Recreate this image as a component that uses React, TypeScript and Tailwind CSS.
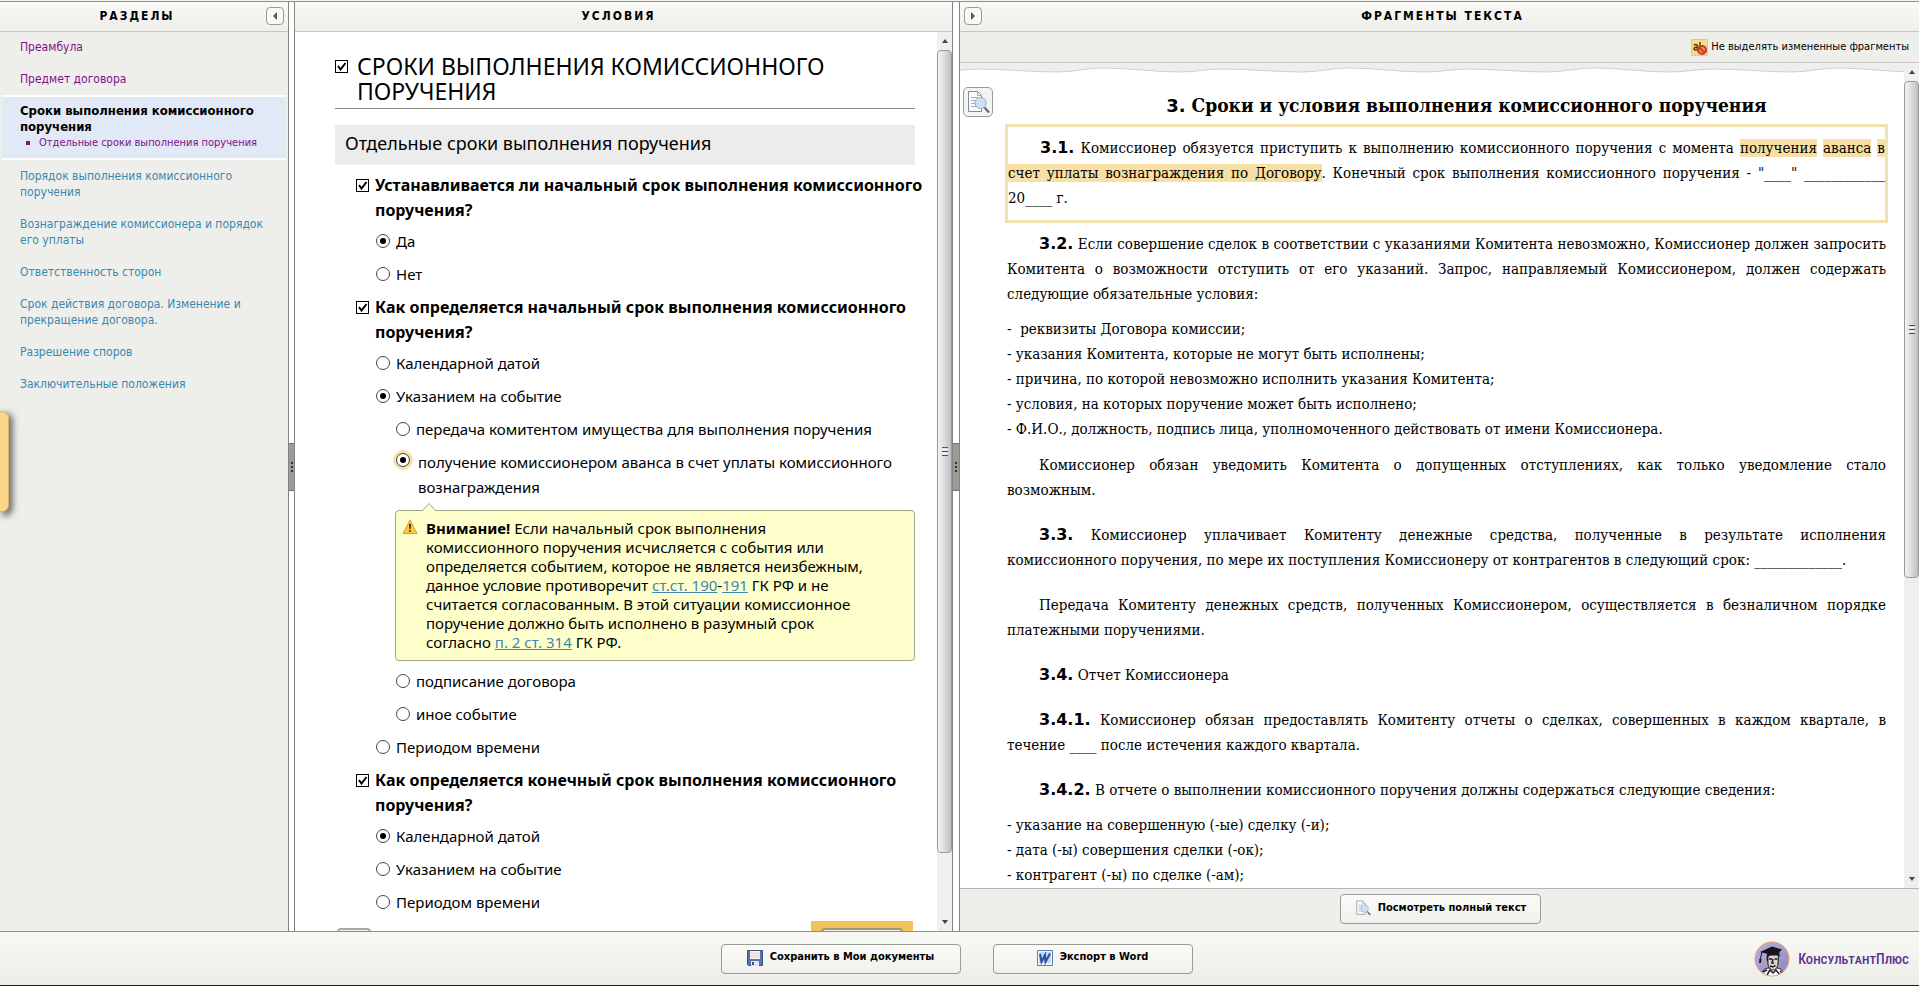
import React, { useState } from "react";

const App = () => {
  return (
    <div className="relative flex h-screen flex-col overflow-hidden border-t border-[#f4f4f1] bg-white font-['DejaVu_Sans_Condensed','DejaVu_Sans',sans-serif] text-[15px] text-black">
      <main className="grid min-h-0 flex-1 grid-cols-[minmax(0,288fr)_7px_minmax(0,657fr)_8px_minmax(0,959fr)] border-t border-[#8f908c]">
        <Sections />
        <Splitter />
        <Conditions />
        <Splitter />
        <Fragments />
      </main>
      <Footer />

      {/* Pull-out tab */}
      <button
        aria-label="Открыть панель"
        className="absolute left-0 top-[410px] h-[101px] w-[9px] rounded-r-[7px] border border-l-0 border-[#d9b36c] bg-[#fdd58a] shadow-[3px_3px_6px_1px_rgba(60,60,50,0.7)]"
      />
    </div>
  );
};

const Splitter = () => (
  <div className="flex items-center border-x border-[#848583] bg-white">
    <div className="flex h-12 w-full flex-col items-center justify-center gap-0.5 border-y border-[#70716d] bg-[#9b9c98]">
      <span className="h-0.5 w-0.5 bg-[#333]" />
      <span className="h-0.5 w-0.5 bg-[#333]" />
      <span className="h-0.5 w-0.5 bg-[#333]" />
    </div>
  </div>
);

type PanelHeaderProps = {
  title: string;
  className?: string;
  before?: React.ReactNode;
  after?: React.ReactNode;
};

const PanelHeader = ({ title, className = "", before, after }: PanelHeaderProps) => (
  <header className={`flex h-[30px] shrink-0 items-center border-b border-[#c6c7c3] bg-linear-to-b from-[#f8f9f5] to-[#eeefeb] pb-0.5 ${className}`}>
    {before}
    <h2 className="flex-1 text-center font-['DejaVu_Sans_Condensed','DejaVu_Sans',sans-serif] text-xs font-bold tracking-[2px]">
      {title}
    </h2>
    {after}
  </header>
);

const ArrowButton = ({ dir }: { dir: "left" | "right" }) => (
  <button
    aria-label={dir === "left" ? "Свернуть" : "Развернуть"}
    className="flex h-[18px] w-[18px] items-center justify-center rounded border border-[#9a9b98] bg-[#f8f9f6]"
  >
    <svg viewBox="0 0 6 8" className="h-2 w-1.5" fill="#555">
      <path d={dir === "left" ? "M5 0v8L1 4z" : "M1 0v8l4-4z"} />
    </svg>
  </button>
);

/* Sections */

const sections = [
  { name: "Порядок выполнения комиссионного поручения" },
  { name: "Вознаграждение комиссионера и порядок его уплаты" },
  { name: "Ответственность сторон" },
  { name: "Срок действия договора. Изменение и прекращение договора." },
  { name: "Разрешение споров" },
  { name: "Заключительные положения" },
];

const SectionLink = ({ name, visited }: { name: string; visited?: boolean }) => (
  <a href="#" className={`block pl-5 pr-4 ${visited ? "text-[#7d1186]" : "text-[#3a87b2]"}`}>
    {name}
  </a>
);

const Sections = () => (
  <aside className="flex flex-col bg-[#eeefeb]">
    <PanelHeader title="РАЗДЕЛЫ" className="pl-2 pr-1" after={<ArrowButton dir="left" />} />
    <nav className="flex flex-col gap-4 pt-[7px] text-xs leading-4">
      <SectionLink name="Преамбула" visited />
      <SectionLink name="Предмет договора" visited />
      <div className="-my-2 mx-0.5 border-y-2 border-white bg-[#e1e8f6] pb-[7px] pl-[18px] pt-1.5">
        <p className="text-[13px] font-bold leading-4">Сроки выполнения комиссионного поручения</p>
        <a href="#" className="flex items-center gap-[9px] pl-1.5 text-[11px] leading-4 text-[#7d1186]">
          <span className="h-1 w-1 bg-[#7d1186]" />
          Отдельные сроки выполнения поручения
        </a>
      </div>
      {sections.map((s) => (
        <SectionLink key={s.name} name={s.name} />
      ))}
    </nav>
  </aside>
);

/* Scroll bar */

type ScrollBarProps = {
  thumb: string;
};

const ScrollBar = ({ thumb }: ScrollBarProps) => (
  <div className="flex w-[15px] shrink-0 flex-col items-center bg-[#efefef]">
    <svg viewBox="0 0 6 4" className="mb-[7px] mt-[7px] h-1 w-1.5 shrink-0" fill="#444">
      <path d="M0 4h6L3 0z" />
    </svg>
    <div className="flex min-h-0 w-full flex-1 flex-col">
      <div className={`flex w-full flex-col items-center justify-center gap-px rounded-sm border border-[#98999b] bg-linear-to-r from-[#f4f4f4] via-[#dcdcdf] to-[#bdbec1] ${thumb}`}>
        <span className="h-px w-1.5 bg-[#555]" />
        <span className="h-px w-1.5 bg-white" />
        <span className="h-px w-1.5 bg-[#555]" />
        <span className="h-px w-1.5 bg-white" />
        <span className="h-px w-1.5 bg-[#555]" />
      </div>
    </div>
    <svg viewBox="0 0 6 4" className="my-[7px] h-1 w-1.5 shrink-0" fill="#444">
      <path d="M0 0h6L3 4z" />
    </svg>
  </div>
);

/* Conditions */

type CheckProps = {
  id: string;
  className?: string;
};

const Check = ({ id, className = "" }: CheckProps) => (
  <span className={`grid h-[13px] w-[13px] shrink-0 ${className}`}>
    <input
      id={id}
      type="checkbox"
      defaultChecked
      className="peer col-start-1 row-start-1 h-[13px] w-[13px] appearance-none border border-black bg-white"
    />
    <svg
      viewBox="0 0 13 13"
      className="pointer-events-none invisible col-start-1 row-start-1 h-[13px] w-[13px] peer-checked:visible"
      fill="none"
      stroke="#000"
      strokeWidth="2"
    >
      <path d="M3 6l2.500 3.500L10.500 3" />
    </svg>
  </span>
);

const Question = ({ id, text }: { id: string; text: string }) => (
  <div className="mt-2 flex gap-1.5 pl-[21px]">
    <Check id={id} className="mt-1.5" />
    <label htmlFor={id} className="text-base font-bold leading-[25px]">
      {text}
    </label>
  </div>
);

type OptionProps = {
  name: string;
  value: string;
  label: string;
  current: string;
  onPick: (value: string) => void;
  glow?: boolean;
};

const Option = ({ name, value, label, current, onPick, glow }: OptionProps) => (
  <label className={`flex leading-[25px] ${glow ? "gap-2" : "gap-1.5"}`}>
    <input
      type="radio"
      name={name}
      value={value}
      checked={current === value}
      onChange={() => onPick(value)}
      className={`h-3.5 w-3.5 shrink-0 appearance-none rounded-full border border-[#444] bg-white bg-clip-content p-[3px] checked:bg-black ${glow ? "mt-[3px] ring-[3px] ring-[#f6e2ab]" : "mt-[5px]"}`}
    />
    <span>{label}</span>
  </label>
);

const Conditions = () => {
  const [hasStart, setHasStart] = useState("yes");
  const [start, setStart] = useState("event");
  const [event, setEvent] = useState("advance");
  const [end, setEnd] = useState("date");

  return (
    <section className="flex flex-col overflow-hidden font-['Noto_Sans','DejaVu_Sans',sans-serif]">
      <PanelHeader title="УСЛОВИЯ" className="pr-2.5" />
      <div className="flex min-h-0 flex-1">
        <div className="min-w-0 flex-1 overflow-hidden pl-10 pr-3 pt-[22px]">
          <div className="mr-2.5 flex gap-[9px] border-b border-[#8a8b86] pb-1">
            <Check id="main" className="mt-1.5" />
            <label htmlFor="main" className="text-[23px] leading-[25px]">
              СРОКИ ВЫПОЛНЕНИЯ КОМИССИОННОГО ПОРУЧЕНИЯ
            </label>
          </div>
          <h3 className="mb-[7px] mr-2.5 mt-4 bg-[#ececec] px-2.5 pb-1 text-lg leading-9">
            Отдельные сроки выполнения поручения
          </h3>

          <Question id="q1" text="Устанавливается ли начальный срок выполнения комиссионного поручения?" />
          <div className="mt-1.5 flex flex-col gap-2 pl-[41px]">
            <Option name="has-start" value="yes" label="Да" current={hasStart} onPick={setHasStart} />
            <Option name="has-start" value="no" label="Нет" current={hasStart} onPick={setHasStart} />
          </div>

          <Question id="q2" text="Как определяется начальный срок выполнения комиссионного поручения?" />
          <div className="mt-1.5 flex flex-col gap-2 pl-[41px]">
            <Option name="start" value="date" label="Календарной датой" current={start} onPick={setStart} />
            <Option name="start" value="event" label="Указанием на событие" current={start} onPick={setStart} />
            <div className="flex flex-col gap-2 pl-5">
              <Option
                name="event"
                value="transfer"
                label="передача комитентом имущества для выполнения поручения"
                current={event}
                onPick={setEvent}
              />
              <Option
                name="event"
                value="advance"
                label="получение комиссионером аванса в счет уплаты комиссионного вознаграждения"
                current={event}
                onPick={setEvent}
                glow
              />
              <Warning />
              <Option name="event" value="signing" label="подписание договора" current={event} onPick={setEvent} />
              <Option name="event" value="other" label="иное событие" current={event} onPick={setEvent} />
            </div>
            <Option name="start" value="period" label="Периодом времени" current={start} onPick={setStart} />
          </div>

          <Question id="q3" text="Как определяется конечный срок выполнения комиссионного поручения?" />
          <div className="mt-1.5 flex flex-col gap-2 pl-[41px]">
            <Option name="end" value="date" label="Календарной датой" current={end} onPick={setEnd} />
            <Option name="end" value="event" label="Указанием на событие" current={end} onPick={setEnd} />
            <Option name="end" value="period" label="Периодом времени" current={end} onPick={setEnd} />
          </div>

          <div className="mr-3 mt-1.5 flex items-start justify-between">
            <button aria-label="Назад" className="ml-0.5 mt-[7px] h-8 w-[34px] rounded border-2 border-[#a9aaa6] bg-[#f5f6f2]" />
            <span className="bg-[#f0c35c] px-2.5 py-[7px]">
              <button aria-label="Далее" className="block h-8 w-[82px] rounded border-2 border-[#a39678] bg-[#f5f6f2]" />
            </span>
          </div>
        </div>
        <ScrollBar thumb="h-[93%]" />
      </div>
    </section>
  );
};

const Warning = () => (
  <div className="relative -ml-px mr-2.5 mt-0.5 flex items-start gap-2 rounded-sm border border-[#a3a48c] bg-[#ffffcb] pb-2 pl-1.5 pr-12 pt-2 leading-[19px]">
    <svg viewBox="0 0 14 8" className="absolute -top-2 left-[26px] h-2 w-3.5" fill="#ffffcb">
      <path d="M0 8L7 .5 14 8" stroke="#a3a48c" />
    </svg>
    <svg viewBox="0 0 16 16" className="h-4 w-4 shrink-0">
      <path d="M8 1L15 14.500H1z" fill="#fbc83c" stroke="#dd9a3c" strokeLinejoin="round" />
      <path d="M7 5h2l-.4 5H7.400z" fill="#3b2a08" />
      <circle cx="8" cy="12" r="1" fill="#3b2a08" />
    </svg>
    <p>
      <b>Внимание!</b> Если начальный срок выполнения комиссионного поручения исчисляется с события или
      определяется событием, которое не является неизбежным, данное условие противоречит{" "}
      <a href="#" className="text-[#3a87b2] underline">ст.ст. 190</a>-
      <a href="#" className="text-[#3a87b2] underline">191</a> ГК РФ и не считается согласованным. В этой
      ситуации комиссионное поручение должно быть исполнено в разумный срок согласно{" "}
      <a href="#" className="text-[#3a87b2] underline">п. 2 ст. 314</a> ГК РФ.
    </p>
  </div>
);

/* Text fragments */

const PreviewIcon = ({ className }: { className: string }) => (
  <svg viewBox="0 0 24 24" className={className} fill="none">
    <path d="M2.500 1.500h9l4 4v16h-13z" fill="#fafbfd" stroke="#7f8796" />
    <path d="M11.500 1.500v4h4M5 7.500h7M5 10.500h5M5 13.500h4M5 16.500h6" stroke="#a3acbe" />
    <circle cx="14.500" cy="13" r="5.500" fill="#cfe0f3" stroke="#9aa9c2" />
    <path d="M18.500 17.500L23 22.500" stroke="#5c6270" strokeWidth="2" />
  </svg>
);

const Num = ({ children }: { children: string }) => (
  <b className="font-['DejaVu_Sans',sans-serif] text-base leading-none">{children}</b>
);

const Wave = () => (
  <svg className="block h-2.5 w-full shrink-0">
    <defs>
      <pattern id="wave" width="245" height="10" patternUnits="userSpaceOnUse">
        <path
          d="M-25-2V9C-10 9 3 6 18 6C45 6 70 9 97 9C113 9 127 5 143 5C170 5 193 9 220 9C235 9 248 6 263 6V-2z"
          fill="#eeefeb"
          stroke="#cfd0cc"
        />
      </pattern>
    </defs>
    <rect width="100%" height="10" fill="url(#wave)" />
  </svg>
);

const Fragments = () => (
  <section className="flex flex-col overflow-hidden">
    <PanelHeader title="ФРАГМЕНТЫ ТЕКСТА" className="pl-1 pr-4" before={<ArrowButton dir="right" />} />
    <div className="flex h-[31px] shrink-0 items-center justify-end border-b border-[#c6c7c3] bg-[#eeefeb] pr-2.5">
      <button className="flex items-center gap-[3px] text-[11px]">
        <svg viewBox="0 0 17 17" className="h-[17px] w-[17px]" fill="none">
          <path d="M.5.5h16v16H.500z" fill="#fadb87" stroke="#e2c88a" />
          <path d="M3 6.500C4 5 6.500 5 6.500 7.500V11M6.500 8C4 8 3 9 3 10s2 1.500 3.500 0M9 3v6" stroke="#5a3a10" strokeWidth="1.500" />
          <circle cx="11" cy="11" r="4" fill="#f08a62" stroke="#cc3a22" strokeWidth="2" />
          <path d="M8 8.500l6 5.500" stroke="#cc3a22" strokeWidth="2" />
        </svg>
        Не выделять измененные фрагменты
      </button>
    </div>
    <div className="flex min-h-0 flex-1">
      <div className="flex min-w-0 flex-1 flex-col overflow-hidden">
        <Wave />
        <div className="flex">
          <div className="w-[45px] shrink-0 pl-[3px] pt-3.5">
            <button
              aria-label="Просмотр"
              className="flex h-[30px] w-[30px] items-center justify-center rounded-[5px] border border-[#9a9b98] bg-[#f3f4f0]"
            >
              <PreviewIcon className="h-6 w-6" />
            </button>
          </div>
          <article className="min-w-0 flex-1 pr-4 pt-5 text-justify font-['DejaVu_Serif_Condensed','DejaVu_Serif',serif] leading-[25px]">
            <h3 className="mb-1.5 text-center indent-10 text-[19px] font-bold">
              <span className="font-['DejaVu_Sans',sans-serif] text-lg leading-none">3.</span> Сроки и условия выполнения комиссионного поручения
            </h3>
            <p className="border-[3px] border-[#f0e1b2] py-[9px] indent-8">
              <Num>3.1.</Num> Комиссионер обязуется приступить к выполнению комиссионного поручения с момента{" "}
              <mark className="bg-[#f8dfa4]">получения</mark> <mark className="bg-[#f8dfa4]">аванса</mark>{" "}
              <mark className="bg-[#f8dfa4]">в счет уплаты вознаграждения по Договору</mark>. Конечный срок
              выполнения комиссионного поручения - "____" ____________ 20____ г.
            </p>
            <div className="px-0.5 pt-[9px]">
              <p className="indent-8">
                <Num>3.2.</Num> Если совершение сделок в соответствии с указаниями Комитента невозможно, Комиссионер
                должен запросить Комитента о возможности отступить от его указаний. Запрос, направляемый Комиссионером,
                должен содержать следующие обязательные условия:
              </p>
              <ul className="my-2.5">
                <li>-&nbsp; реквизиты Договора комиссии;</li>
                <li>- указания Комитента, которые не могут быть исполнены;</li>
                <li>- причина, по которой невозможно исполнить указания Комитента;</li>
                <li>- условия, на которых поручение может быть исполнено;</li>
                <li>- Ф.И.О., должность, подпись лица, уполномоченного действовать от имени Комиссионера.</li>
              </ul>
              <div className="flex flex-col gap-5 pt-px indent-8">
                <p className="[text-align-last:justify]">
                  Комиссионер обязан уведомить Комитента о допущенных отступлениях, как только уведомление стало
                  <br />
                  возможным.
                </p>
                <p>
                  <Num>3.3.</Num> Комиссионер уплачивает Комитенту денежные средства, полученные в результате
                  исполнения комиссионного&nbsp;поручения, по мере их поступления Комиссионеру от контрагентов в
                  следующий срок: _____________.
                </p>
                <p>
                  Передача Комитенту денежных средств, полученных Комиссионером, осуществляется в безналичном порядке
                  платежными поручениями.
                </p>
                <p>
                  <Num>3.4.</Num> Отчет Комиссионера
                </p>
                <p>
                  <Num>3.4.1.</Num> Комиссионер обязан предоставлять Комитенту отчеты о сделках, совершенных в каждом
                  квартале, в течение&nbsp;____ после истечения каждого квартала.
                </p>
                <p>
                  <Num>3.4.2.</Num> В отчете о выполнении комиссионного поручения должны содержаться следующие сведения:
                </p>
              </div>
              <ul className="mt-2.5">
                <li>- указание на совершенную (-ые) сделку (-и);</li>
                <li>- дата (-ы) совершения сделки (-ок);</li>
                <li>- контрагент (-ы) по сделке (-ам);</li>
              </ul>
            </div>
          </article>
        </div>
      </div>
      <ScrollBar thumb="h-[63%]" />
    </div>
    <div className="flex h-[43px] shrink-0 items-center justify-center border-t border-[#b4b5b1] bg-[#eeefeb] pb-0.5 pl-0.5">
      <BarButton icon={<PreviewIcon className="h-4 w-4" />} className="w-[201px]">
        Посмотреть полный текст
      </BarButton>
    </div>
  </section>
);

/* Footer */

type BarButtonProps = {
  icon: React.ReactNode;
  className: string;
  children: string;
};

const BarButton = ({ icon, className, children }: BarButtonProps) => (
  <button
    className={`flex h-[30px] items-center justify-center gap-[7px] rounded border border-[#9a9b97] bg-linear-to-b from-[#fafbf7] to-[#f0f1ed] pb-0.5 text-[11px] font-bold ${className}`}
  >
    {icon}
    {children}
  </button>
);

const SaveIcon = () => (
  <svg viewBox="0 0 16 16" className="h-4 w-4">
    <path d="M.5.5h15v15h-14l-1-1z" fill="#5773ae" stroke="#3d4f86" />
    <path d="M3 1h10v8H3z" fill="#fbf6f2" />
    <path d="M3 3h10M3 5h10M3 7h10" stroke="#e6cfc8" />
    <path d="M4 11h8v5H4z" fill="#dfe6f2" />
    <path d="M5 12h2v3H5z" fill="#3d4f86" />
  </svg>
);

const WordIcon = () => (
  <svg viewBox="0 0 16 16" className="h-4 w-4">
    <path d="M.5.5h15v15H.500z" fill="#f4f8fd" stroke="#5b7fb8" />
    <path d="M2 2h12v11H2z" fill="#c3d6ee" />
    <path d="M3 4l1.500 8L8 5l.5 7L13 3.500" fill="none" stroke="#274f9c" strokeWidth="2" />
  </svg>
);

const Logo = () => (
  <a href="#" className="flex items-center gap-2 justify-self-end text-[#5b3596]">
    <svg viewBox="0 0 36 36" className="h-9 w-9">
      <defs>
        <clipPath id="disc">
          <circle cx="18" cy="18" r="16.500" />
        </clipPath>
        <linearGradient id="sky" x2="1" y2="1">
          <stop offset="0" stopColor="#b9b3d6" />
          <stop offset="1" stopColor="#8d86bd" />
        </linearGradient>
      </defs>
      <circle cx="18" cy="18" r="17" fill="url(#sky)" stroke="#e9a06c" />
      <g clipPath="url(#disc)">
        <path d="M6 37c1-7 5-10 9-10h7c5 0 8 3 9 10z" fill="#fff" stroke="#1b1a22" />
        <path d="M13.500 14h11l-.5 9c-.5 4-3 6-5 6s-4.500-2-5-6z" fill="#d9d3cc" stroke="#1b1a22" />
        <path d="M13 11l12-1 1 6c-2-2-4-2-6-2s-4 0-5.500 1.500L14 21l-1.500-2z" fill="#1b1a22" />
        <path
          d="M15 18h3M20.500 18h3M19 18l-1 4h2M16 25c2 1 4 1 5.500-.5M9 31l4-2M13 34l3-5 3 3 3-3 4 5M26 30l3 3M8 34l3-1"
          fill="none"
          stroke="#1b1a22"
          strokeWidth="1.500"
        />
        <path d="M6 11l12-5.500 10 3-3 3-11 1.500z" fill="#15141c" />
        <path d="M8 11L6 19" fill="none" stroke="#15141c" />
        <path d="M5.500 18h2l-.5 4H5z" fill="#15141c" />
      </g>
    </svg>
    <span className="font-['Roboto_Condensed',Roboto,sans-serif] text-sm font-medium leading-none [font-variant:small-caps]">
      КонсультантПлюс
    </span>
  </a>
);

const Footer = () => (
  <footer className="grid h-[55px] shrink-0 grid-cols-[1fr_auto_1fr] items-center border-b border-t border-b-[#1f1f1f] border-t-[#8f908c] bg-linear-to-b from-[#f8f9f5] to-[#ecede9] pl-1 pr-2.5">
    <span />
    <div className="flex gap-8">
      <BarButton icon={<SaveIcon />} className="w-60">
        Сохранить в Мои документы
      </BarButton>
      <BarButton icon={<WordIcon />} className="w-[200px]">
        Экспорт в Word
      </BarButton>
    </div>
    <Logo />
  </footer>
);

export default App;
